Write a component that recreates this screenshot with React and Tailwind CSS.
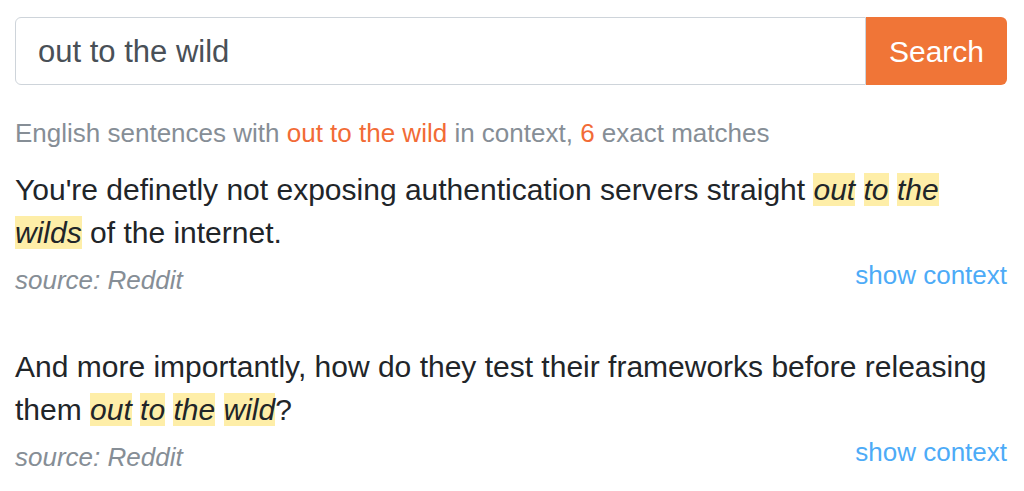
const results = [
  {
    parts: [
      "You're definetly not exposing authentication servers straight ",
      { hl: "out" },
      " ",
      { hl: "to" },
      " ",
      { hl: "the" },
      " ",
      { hl: "wilds" },
      " of the internet.",
    ],
    source: "Reddit",
  },
  {
    parts: [
      "And more importantly, how do they test their frameworks before releasing them ",
      { hl: "out" },
      " ",
      { hl: "to" },
      " ",
      { hl: "the" },
      " ",
      { hl: "wild" },
      "?",
    ],
    source: "Reddit",
  },
];

function Sentence({ parts }) {
  return (
    <p className="text-[30px] leading-[43px] text-[#212529]">
      {parts.map((p, i) =>
        typeof p === "string" ? (
          <span key={i}>{p}</span>
        ) : (
          <em key={i} className="bg-[#feeea8] italic">
            {p.hl}
          </em>
        )
      )}
    </p>
  );
}

export default function App() {
  return (
    <div
      className="bg-white w-[1024px] h-[491px] overflow-hidden pl-[15px] pr-[17px] pt-[17px]"
      style={{ fontFamily: '"Liberation Sans", Arial, sans-serif' }}
    >
      {/* search bar */}
      <div className="flex h-[68px]">
        <input
          readOnly
          value="out to the wild"
          className="flex-1 min-w-0 border border-[#ced4da] rounded-l-[6px] px-[22px] pt-[2px] text-[31px] text-[#495057] outline-none"
        />
        <button className="w-[141px] bg-[#f07537] text-white text-[30px] rounded-r-[6px]">
          Search
        </button>
      </div>

      {/* summary */}
      <p className="mt-[30px] text-[26px] leading-[36px] text-[#868e96]">
        English sentences with <span className="text-[#f26b36]">out to the wild</span> in
        context, <span className="text-[#f26b36]">6</span> exact matches
      </p>

      {/* results */}
      <div className="mt-[17px] flex flex-col gap-[47px]">
        {results.map((r, i) => (
          <div key={i}>
            <Sentence parts={r.parts} />
            <div className="flex justify-between items-start">
              <span className="mt-[8px] text-[26px] leading-[36px] italic text-[#868e96]">
                source: {r.source}
              </span>
              <a className="mt-[3px] text-[26px] leading-[36px] text-[#4dabf7]">show context</a>
            </div>
          </div>
        ))}
      </div>
    </div>
  );
}
